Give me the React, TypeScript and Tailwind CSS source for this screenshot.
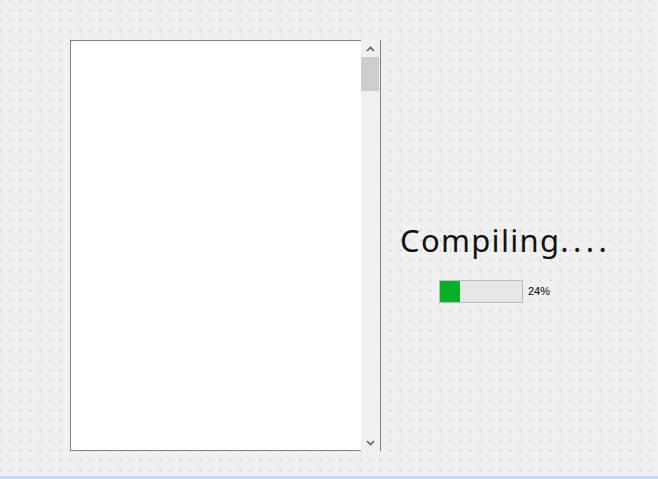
import React from 'react';

export default function App() {
  const percent = 24;

  return (
    <div className="w-[658px] h-[479px] flex flex-col bg-[#f0f0f0] overflow-hidden">
      {/* designer canvas with dot grid */}
      <div className="flex-1 flex pl-[70px] pt-[40px] bg-[image:radial-gradient(circle,#b4b4b4_0.6px,transparent_0.8px)] bg-[size:10px_10px] bg-[position:-4.5px_-4.5px]">
        {/* list widget */}
        <div className="flex h-[411px]">
          <div className="w-[291px] h-full bg-white border border-r-0 border-[#828282]" />
          <div className="w-[19px] h-full bg-[#f0f0f0] flex flex-col">
            <div className="h-[17px] flex items-center justify-center pr-[1px]">
              <svg width="9" height="6" viewBox="0 0 9 6">
                <path d="M1 5 L4.5 1.5 L8 5" fill="none" stroke="#606060" strokeWidth="1.6" />
              </svg>
            </div>
            <div className="w-[18px] h-[34px] bg-[#cdcdcd]" />
            <div className="flex-1" />
            <div className="h-[17px] flex items-center justify-center">
              <svg width="9" height="6" viewBox="0 0 9 6">
                <path d="M1 1 L4.5 4.5 L8 1" fill="none" stroke="#606060" strokeWidth="1.6" />
              </svg>
            </div>
          </div>
          <div className="w-px h-full bg-[#828282]" />
        </div>

        {/* compile status */}
        <div className="ml-[19px] pt-[182px] flex flex-col">
          <div className="text-[31px] leading-[36px] text-[#111] font-['Noto_Sans',sans-serif] tracking-[1.3px] whitespace-nowrap">
            Compiling<span className="tracking-[4.4px]">....</span>
          </div>
          <div className="mt-[22px] ml-[39px] flex items-center">
            <div className="w-[84px] h-[23px] border border-[#bcbcbc] bg-[#e6e6e6]">
              <div className="h-full bg-[#06b025]" style={{ width: `${percent}%` }} />
            </div>
            <span className="ml-[5px] text-[11px] text-black font-['Liberation_Sans',Arial,sans-serif]">
              {percent}%
            </span>
          </div>
        </div>
      </div>
      <div className="h-[3px] bg-[#c5d7ef]" />
    </div>
  );
}
